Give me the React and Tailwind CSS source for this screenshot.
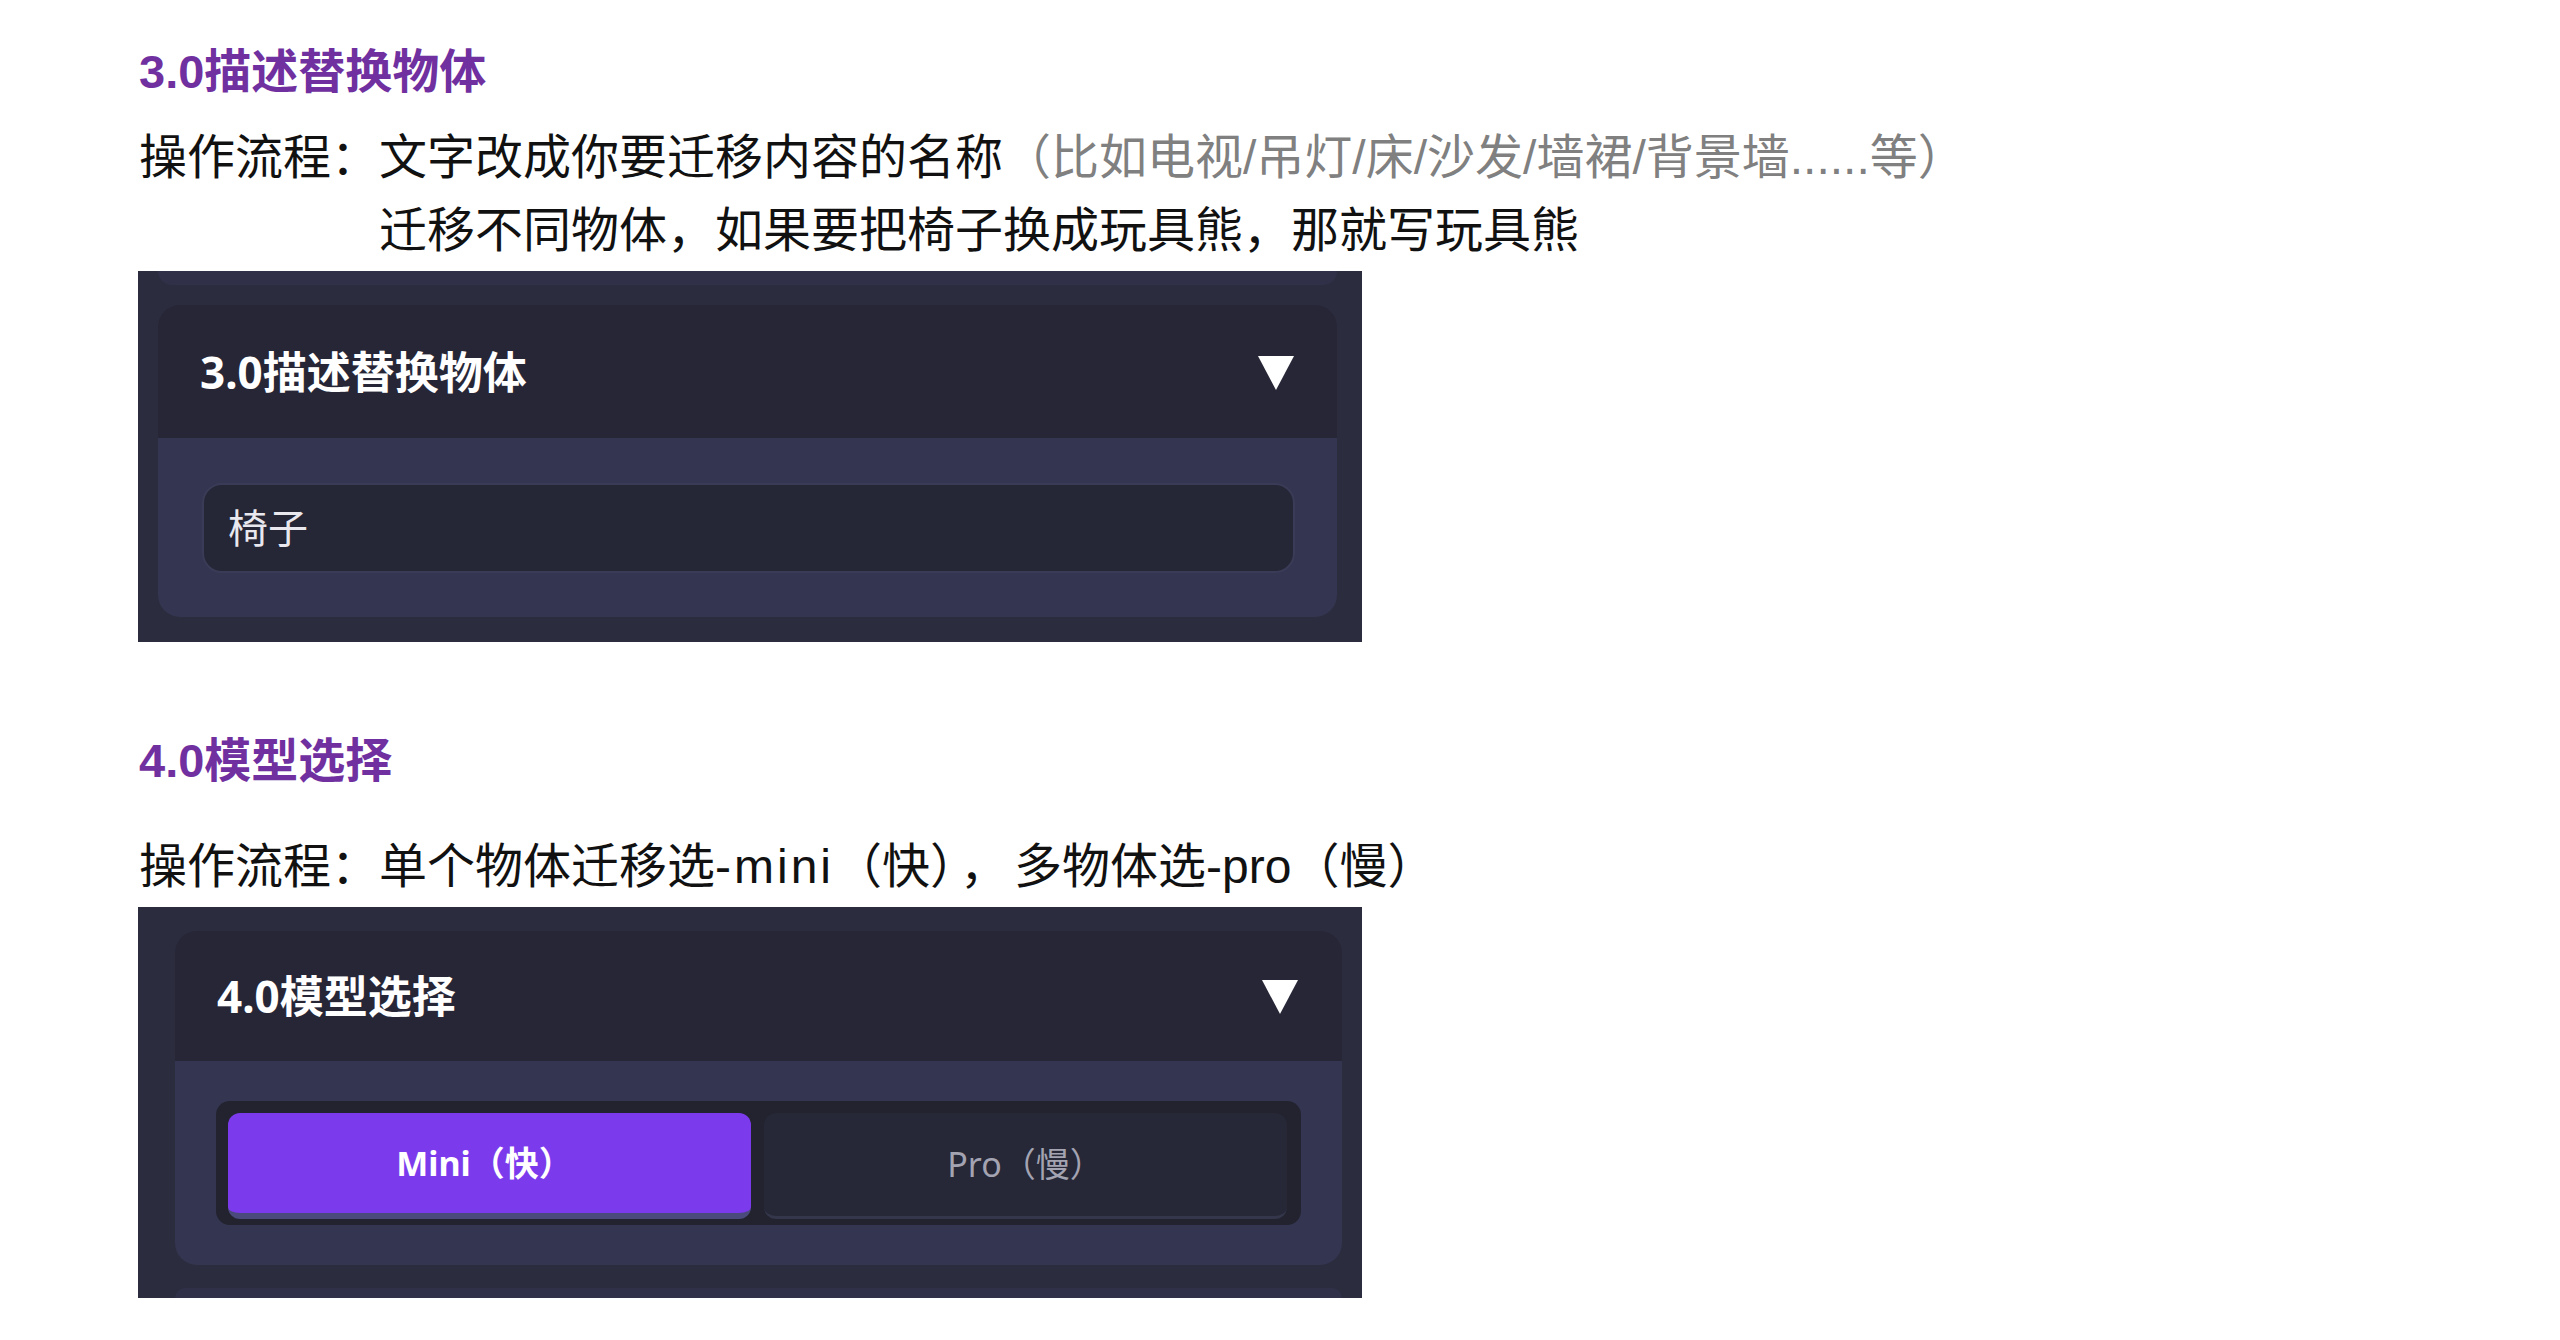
import React from "react";

const docFont = { fontFamily: '"Liberation Sans", "Noto Sans CJK SC", sans-serif' };

const Caret = () => (
  <svg width="36" height="36" viewBox="0 0 36 36" className="shrink-0">
    <polygon points="0,2 36,2 18,36" fill="#ffffff" />
  </svg>
);

const CardHeader = ({ title, height, pl, pr }) => (
  <div
    className={`flex items-center justify-between bg-[#262637] ${height} ${pl} ${pr}`}
  >
    <div className="text-[44px] font-bold leading-none text-white">{title}</div>
    <Caret />
  </div>
);

const App = () => {
  return (
    <div
      className="w-full min-h-[1340px] bg-white pl-[138px] pt-[42px]"
      style={{ fontFamily: '"Noto Sans", "Noto Sans CJK SC", sans-serif' }}
    >
      {/* 3.0 section */}
      <div
        className="pl-[1px] text-[47px] font-bold leading-[60px] text-[#7030a0]"
        style={docFont}
      >
        3.0描述替换物体
      </div>
      <div
        className="mt-[19px] flex pl-[1px] text-[48px] leading-[73px] text-[#111]"
        style={docFont}
      >
        <div className="shrink-0">操作流程：</div>
        <div className="flex flex-col">
          <div className="whitespace-nowrap">
            文字改成你要迁移内容的名称
            <span className="text-[#808080]">（比如电视/吊灯/床/沙发/墙裙/背景墙......等）</span>
          </div>
          <div className="whitespace-nowrap">迁移不同物体，如果要把椅子换成玩具熊，那就写玩具熊</div>
        </div>
      </div>

      <div className="mt-[4px] flex h-[371px] w-[1224px] flex-col bg-[#2b2c3d]">
        <div className="ml-[20px] mr-[25px] h-[14px] rounded-b-[20px] bg-[#303149]" />
        <div className="ml-[20px] mr-[25px] mt-[20px] overflow-hidden rounded-[22px]">
          <CardHeader title="3.0描述替换物体" height="h-[133px]" pl="pl-[42px]" pr="pr-[43px]" />
          <div className="bg-[#343550] pb-[44px] pl-[44px] pr-[42px] pt-[45px]">
            <div className="flex h-[90px] items-center rounded-[20px] border-2 border-[#3a3b56] bg-[#252636] pl-[24px] text-[40px] text-[#e8e8ee]">
              椅子
            </div>
          </div>
        </div>
      </div>

      {/* 4.0 section */}
      <div
        className="mt-[89px] pl-[1px] text-[47px] font-bold leading-[60px] text-[#7030a0]"
        style={docFont}
      >
        4.0模型选择
      </div>
      <div
        className="mt-[46px] whitespace-nowrap pl-[1px] text-[48px] leading-[60px] text-[#111]"
        style={docFont}
      >
        操作流程：单个物体迁移选<span className="tracking-[3px]">-mini</span>（快）
        <span className="px-[6px]">，</span>多物体选-pro（慢）
      </div>

      <div className="mt-[10px] flex h-[391px] w-[1224px] flex-col bg-[#2b2c3d]">
        <div className="ml-[37px] mr-[20px] mt-[24px] overflow-hidden rounded-[22px]">
          <CardHeader title="4.0模型选择" height="h-[130px]" pl="pl-[42px]" pr="pr-[44px]" />
          <div className="bg-[#343550] px-[41px] pb-[40px] pt-[40px]">
            <div className="flex h-[124px] gap-[13px] rounded-[14px] bg-[#22232f] pb-[6px] pl-[12px] pr-[14px] pt-[12px]">
              <div className="flex w-[523px] shrink-0 items-center justify-center rounded-[12px] border-b-[6px] border-[#4a4a7c] bg-[#7c3aed] pr-[10px] text-[34px] font-bold text-white">
                Mini（快）
              </div>
              <div className="flex flex-1 items-center justify-center rounded-[12px] border-b-[3px] border-[#34364b] bg-[#262837] text-[34px] text-[#a3a3b2]">
                Pro（慢）
              </div>
            </div>
          </div>
        </div>
        <div className="ml-[37px] mr-[20px] mt-[23px] h-[10px] rounded-t-[20px] bg-[#303149]" />
      </div>
    </div>
  );
};

export default App;
